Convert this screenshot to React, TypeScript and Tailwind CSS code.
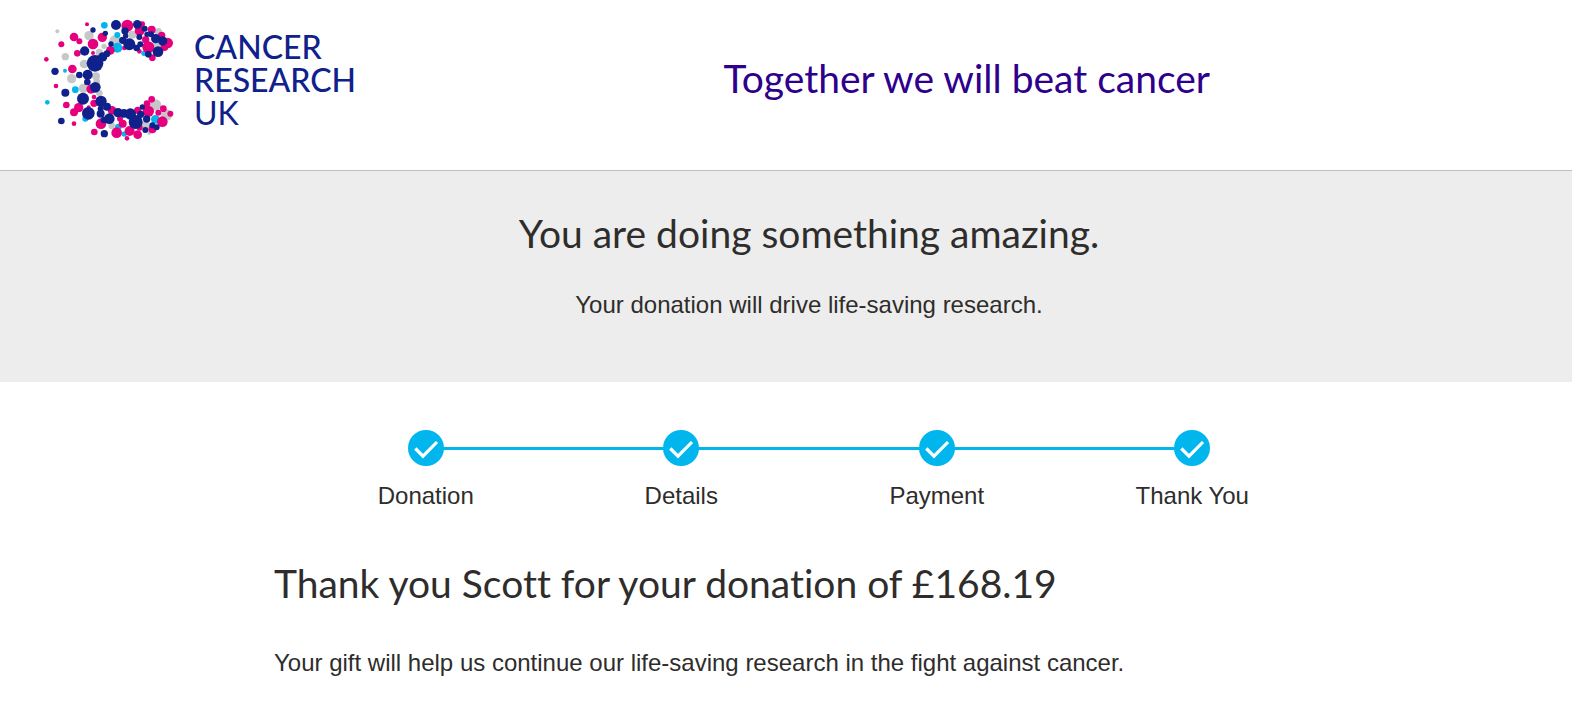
const NAVY = '#10218b';
const PINK = '#e6007e';
const CYAN = '#00b6ed';
const GREY = '#c6c7c8';

// [cx, cy, r] lists, painted in the order grey, cyan, pink, navy
const dots: { color: string; points: number[][] }[] = [
  {
    color: GREY,
    points: [
      [52, 49, 6], [147, 62, 14], [225, 78, 17], [76, 125, 11], [178, 112, 11],
      [192, 94, 8], [132, 147, 13], [95, 191, 14], [168, 184, 12], [277, 59, 12],
      [355, 50, 11], [348, 93, 12], [130, 220, 14], [178, 234, 10], [215, 332, 10],
      [347, 270, 17], [380, 300, 17], [316, 329, 12], [328, 354, 6], [170, 200, 10],
    ],
  },
  {
    color: CYAN,
    points: [
      [193, 31, 10], [232, 60, 9], [232, 98, 15], [75, 167, 6], [312, 115, 8],
      [106, 224, 10], [22, 262, 7], [136, 311, 9], [235, 336, 10], [253, 357, 8],
      [346, 313, 13],
    ],
  },
  {
    color: PINK,
    points: [
      [141, 28, 6], [102, 66, 13], [118, 79, 9], [159, 87, 16], [187, 67, 14],
      [64, 88, 9], [112, 115, 10], [19, 133, 7], [159, 114, 6], [211, 106, 13],
      [97, 162, 13], [262, 32, 18], [307, 27, 8], [299, 47, 15], [335, 44, 12],
      [365, 61, 11], [383, 84, 16], [317, 74, 11], [325, 97, 18], [373, 96, 12],
      [298, 109, 7], [337, 128, 10], [253, 99, 7], [48, 213, 7], [153, 222, 14],
      [162, 246, 7], [162, 265, 11], [79, 270, 10], [116, 278, 14], [102, 292, 12],
      [146, 277, 6], [102, 326, 7], [183, 326, 16], [216, 286, 13], [163, 351, 10],
      [230, 353, 16], [293, 286, 11], [335, 253, 10], [321, 266, 10], [325, 289, 17],
      [370, 281, 10], [355, 293, 9], [391, 296, 9], [367, 320, 16], [337, 343, 12],
      [248, 326, 12], [240, 311, 9], [299, 338, 9], [269, 348, 15], [293, 359, 13],
      [261, 370, 7],
    ],
  },
  {
    color: NAVY,
    points: [
      [228, 30, 15], [159, 45, 8], [196, 55, 8], [134, 108, 14], [213, 87, 8],
      [188, 126, 14], [201, 116, 10], [165, 145, 25], [45, 169, 11], [118, 180, 10],
      [143, 179, 15], [292, 28, 13], [255, 48, 11], [257, 63, 8], [314, 41, 9],
      [298, 66, 9], [321, 58, 8], [333, 58, 9], [347, 71, 14], [368, 78, 14],
      [248, 76, 11], [268, 88, 18], [354, 110, 16], [290, 99, 10], [301, 88, 9],
      [325, 118, 10], [142, 201, 10], [166, 217, 16], [76, 233, 12], [129, 251, 18],
      [183, 259, 17], [201, 275, 12], [182, 281, 9], [145, 295, 19], [182, 296, 12],
      [64, 318, 10], [208, 311, 16], [192, 315, 10], [193, 356, 11], [234, 293, 14],
      [252, 295, 13], [271, 297, 17], [287, 321, 21], [307, 276, 8], [302, 298, 11],
      [320, 312, 11], [337, 331, 9], [350, 337, 9], [316, 345, 9],
    ],
  },
];

const steps = ['Donation', 'Details', 'Payment', 'Thank You'];

function Logo() {
  return (
    <a href="#" className="flex items-start gap-3.5" aria-label="Cancer Research UK">
      <svg viewBox="0 0 420 390" className="h-[130px] w-[140px] shrink-0" aria-hidden="true">
        {dots.map((group) =>
          group.points.map(([cx, cy, r], index) => (
            <circle key={group.color + index} cx={cx} cy={cy} r={r} fill={group.color} />
          ))
        )}
      </svg>
      <span className="mt-[15px] flex flex-col font-[Lato,sans-serif] text-[32px] leading-[33px] text-[#10218b]">
        <span className="font-medium">CANCER</span>
        <span className="font-medium">RESEARCH</span>
        <span>UK</span>
      </span>
    </a>
  );
}

function Step({ label, last }: { label: string; last: boolean }) {
  return (
    <li className="relative flex flex-1 flex-col items-center">
      {!last && <span className="absolute left-1/2 top-[17px] h-[3px] w-full bg-[#00b6ed]" />}
      <span className="relative size-9 rounded-full bg-[#00b6ed]">
        <svg viewBox="0 0 36 36" fill="none" className="size-9" aria-hidden="true">
          <path d="M7.3 18.5 15 26.2 29 12" stroke="#fff" strokeWidth="3.2" />
        </svg>
      </span>
      <span className="mt-3 text-2xl leading-9">{label}</span>
    </li>
  );
}

export default function App() {
  return (
    <div className="min-h-screen bg-white font-['Liberation_Sans',Arial,sans-serif] text-[#2e2d2c]">
      <header className="flex h-[171px] items-start justify-between border-b border-[#c0c0c0] pl-10 pr-[362px] pt-[15px]">
        <Logo />
        <p className="mt-[35px] whitespace-nowrap font-[Lato,sans-serif] text-[39px] leading-[56px] text-[#2e008b]">
          Together we will beat cancer
        </p>
      </header>

      <section className="bg-[#ededed] pb-[59px] pl-[46px] pt-[34px] text-center">
        <h1 className="font-[Lato,sans-serif] text-[39px] leading-[56px]">
          You are doing something amazing.
        </h1>
        <p className="mt-[26px] text-2xl leading-9">Your donation will drive life-saving research.</p>
      </section>

      <main className="pl-[46px]">
        <div className="mx-auto max-w-[1070px]">
          <ol className="mx-6 flex pt-12">
            {steps.map((step, index) => (
              <Step key={step} label={step} last={index === steps.length - 1} />
            ))}
          </ol>
          <h2 className="mt-[41px] font-[Lato,sans-serif] text-[39px] leading-[56px] [font-variant-ligatures:none]">
            Thank you Scott for your donation of £168.19
          </h2>
          <p className="mt-[34px] text-2xl leading-9">
            Your gift will help us continue our life-saving research in the fight against cancer.
          </p>
        </div>
      </main>
    </div>
  );
}
